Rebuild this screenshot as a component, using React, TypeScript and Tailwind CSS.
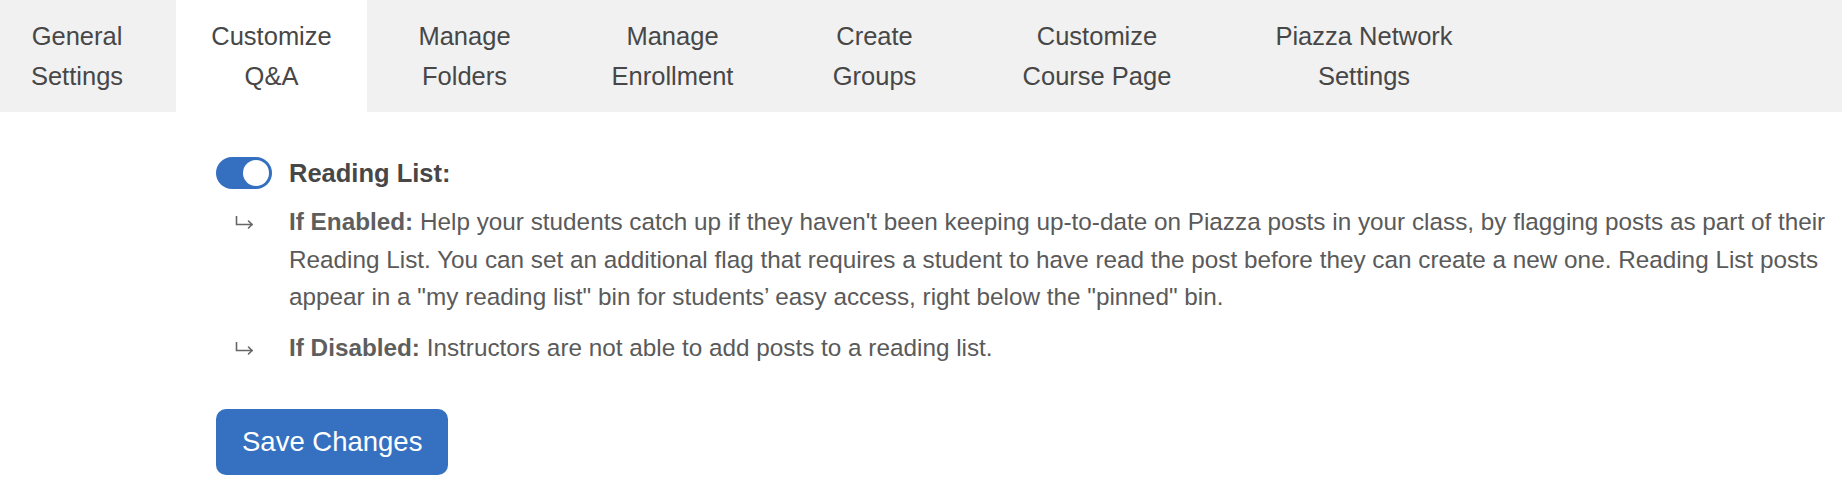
import React from "react";

const tabs: { l1: string; l2: string; w: string; active?: boolean }[] = [
  { l1: "General", l2: "Settings", w: "w-[176px] pr-[22px]" },
  { l1: "Customize", l2: "Q&A", w: "w-[191px]", active: true },
  { l1: "Manage", l2: "Folders", w: "w-[195px]" },
  { l1: "Manage", l2: "Enrollment", w: "w-[221px]" },
  { l1: "Create", l2: "Groups", w: "w-[183px]" },
  { l1: "Customize", l2: "Course Page", w: "w-[262px]" },
  { l1: "Piazza Network", l2: "Settings", w: "w-[272px]" },
];

function Arrow() {
  return (
    <svg width="19" height="14" viewBox="0 0 19 14" fill="none" stroke="#666" strokeWidth="1.6" strokeLinecap="square">
      <path d="M1.5 0.5 V8.5 H17" />
      <path d="M13.5 5 L17 8.5 L13.5 12" strokeLinecap="round" strokeLinejoin="round" />
    </svg>
  );
}

export default function App() {
  return (
    <div className="w-[1842px] h-[492px] bg-white overflow-hidden" style={{ fontFamily: '"Liberation Sans", Arial, Helvetica, sans-serif' }}>
      <nav className="flex h-[112px] bg-[#f1f1f1]">
        {tabs.map((t, i) => (
          <div
            key={i}
            className={`${t.w} h-[112px] flex flex-col items-center justify-center text-[25.5px] leading-[40px] text-[#474747] ${t.active ? "bg-white" : ""}`}
          >
            <span className="whitespace-nowrap">{t.l1}</span>
            <span className="whitespace-nowrap">{t.l2}</span>
          </div>
        ))}
      </nav>

      <div className="pl-[216px] pt-[45px]">
        <div className="flex items-center h-[32px]">
          <div className="w-[56px] h-[32px] rounded-full bg-[#3470bf] flex items-center justify-end pr-[3px]">
            <div className="w-[26px] h-[26px] rounded-full bg-white" />
          </div>
          <span className="ml-[17px] text-[25.5px] font-bold text-[#474747] leading-[32px]">Reading List:</span>
        </div>

        <div className="mt-[14px] flex flex-col gap-[13px] text-[24.3px] leading-[37.6px] text-[#5a5a5a]">
          <div className="flex">
            <div className="w-[73px] shrink-0 pl-[19px] pt-[13px]">
              <Arrow />
            </div>
            <p>
              <b className="font-bold text-[#5e5e5e]">If Enabled:</b> Help your students catch up if they haven't been keeping up-to-date on Piazza posts in your class, by flagging posts as part of their Reading List. You can set an additional flag that requires a student to have read the post before they can create a new one. Reading List posts appear in a "my reading list" bin for students’ easy access, right below the "pinned" bin.
            </p>
          </div>
          <div className="flex">
            <div className="w-[73px] shrink-0 pl-[19px] pt-[13px]">
              <Arrow />
            </div>
            <p>
              <b className="font-bold text-[#5e5e5e]">If Disabled:</b> Instructors are not able to add posts to a reading list.
            </p>
          </div>
        </div>

        <button className="mt-[43px] h-[66px] px-[26px] rounded-[10px] bg-[#3571c0] text-white text-[27.5px] leading-[66px]">
          Save Changes
        </button>
      </div>
    </div>
  );
}
